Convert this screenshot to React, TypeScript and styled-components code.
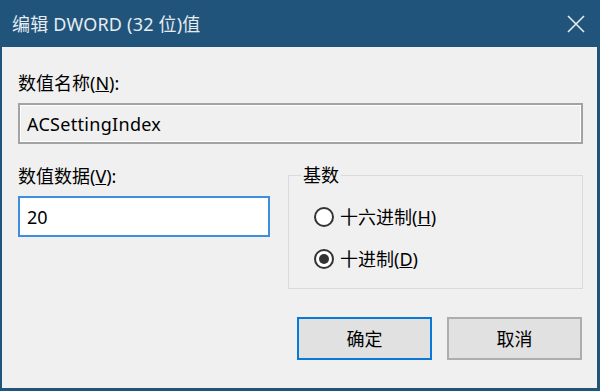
import React from "react";
import styled, { createGlobalStyle } from "styled-components";

const Global = createGlobalStyle`
  html, body { margin: 0; padding: 0; background: #f0f0f0; }
  body { width: 600px; height: 391px; overflow: hidden; }
  * { box-sizing: border-box; }
`;

const FONT = `"Noto Sans", "Noto Sans CJK SC", sans-serif`;

const Window = styled.div`
  width: 600px;
  height: 391px;
  display: flex;
  flex-direction: column;
  background: #f0f0f0;
  border-left: 2px solid #21547b;
  border-right: 3px solid #21547b;
  border-bottom: 3px solid #21547b;
  font-family: ${FONT};
  font-size: 18px;
  color: #000;
`;

const TitleBar = styled.div`
  height: 47px;
  flex: none;
  background: #21547b;
  display: flex;
  align-items: center;
  justify-content: space-between;
  padding: 0 14px 0 12px;
  margin-left: -2px;
  margin-right: -3px;
`;

const Title = styled.div`
  color: #e6ecf1;
  font-size: 18px;
  line-height: 24px;
  letter-spacing: 0.2px;
`;

const CloseButton = styled.div`
  width: 20px;
  height: 20px;
  display: flex;
  align-items: center;
  justify-content: center;
`;

const Body = styled.div`
  flex: 1;
  display: flex;
  flex-direction: column;
  padding: 24px 14px 0 16px;
`;

const Label = styled.div`
  line-height: 24px;
  height: 24px;
`;

const NameBox = styled.div`
  margin-top: 8px;
  height: 41px;
  border: 2px solid #a3a3a3;
  box-shadow: inset 0 0 0 1px #ffffff;
  background: #f0f0f0;
  display: flex;
  align-items: center;
  padding-left: 7px;
  line-height: 24px;
  letter-spacing: 0.3px;
`;

const Row = styled.div`
  margin-top: 19px;
  display: grid;
  grid-template-columns: 252px 295px;
  column-gap: 18px;
  align-items: start;
`;

const LeftCol = styled.div`
  display: flex;
  flex-direction: column;
  padding-top: 1px;
`;

const DataBox = styled.div`
  margin-top: 8px;
  height: 41px;
  border: 2px solid #3d8ee0;
  background: #ffffff;
  display: flex;
  align-items: center;
  padding-left: 7px;
  line-height: 24px;
`;

const Group = styled.fieldset`
  margin: 0;
  height: 126px;
  border: 1px solid #dadada;
  padding: 18px 12px 0 25px;
  display: flex;
  flex-direction: column;
  gap: 18px;
`;

const Legend = styled.legend`
  padding: 0 2px;
  margin-left: -13px;
  line-height: 24px;
`;

const RadioRow = styled.label`
  display: flex;
  align-items: center;
  gap: 6px;
  line-height: 24px;
`;

const RadioCircle = styled.span<{ $checked?: boolean }>`
  width: 20px;
  height: 20px;
  flex: none;
  border-radius: 50%;
  border: 2px solid #333333;
  background: #ffffff;
  display: flex;
  align-items: center;
  justify-content: center;
  &::after {
    content: "";
    width: 10px;
    height: 10px;
    border-radius: 50%;
    background: ${(p) => (p.$checked ? "#333333" : "transparent")};
  }
`;

const Buttons = styled.div`
  margin-top: 28px;
  display: flex;
  justify-content: flex-end;
  gap: 15px;
  padding-right: 1px;
`;

const Button = styled.div<{ $default?: boolean }>`
  width: 135px;
  height: 43px;
  background: #e1e1e1;
  border: 2px solid ${(p) => (p.$default ? "#0a78d7" : "#adadad")};
  display: flex;
  align-items: center;
  justify-content: center;
  line-height: 24px;
`;

export default function App() {
  return (
    <>
      <Global />
      <Window>
        <TitleBar>
          <Title>编辑 DWORD (32 位)值</Title>
          <CloseButton>
            <svg width="18" height="18" viewBox="0 0 18 18">
              <path d="M1 1 L17 17 M17 1 L1 17" stroke="#e6ecf1" strokeWidth="1.6" fill="none" />
            </svg>
          </CloseButton>
        </TitleBar>
        <Body>
          <Label>
            数值名称(<u>N</u>):
          </Label>
          <NameBox>ACSettingIndex</NameBox>
          <Row>
            <LeftCol>
              <Label>
                数值数据(<u>V</u>):
              </Label>
              <DataBox>20</DataBox>
            </LeftCol>
            <Group>
              <Legend>基数</Legend>
              <RadioRow>
                <RadioCircle />
                <span>
                  十六进制(<u>H</u>)
                </span>
              </RadioRow>
              <RadioRow>
                <RadioCircle $checked />
                <span>
                  十进制(<u>D</u>)
                </span>
              </RadioRow>
            </Group>
          </Row>
          <Buttons>
            <Button $default>确定</Button>
            <Button>取消</Button>
          </Buttons>
        </Body>
      </Window>
    </>
  );
}
